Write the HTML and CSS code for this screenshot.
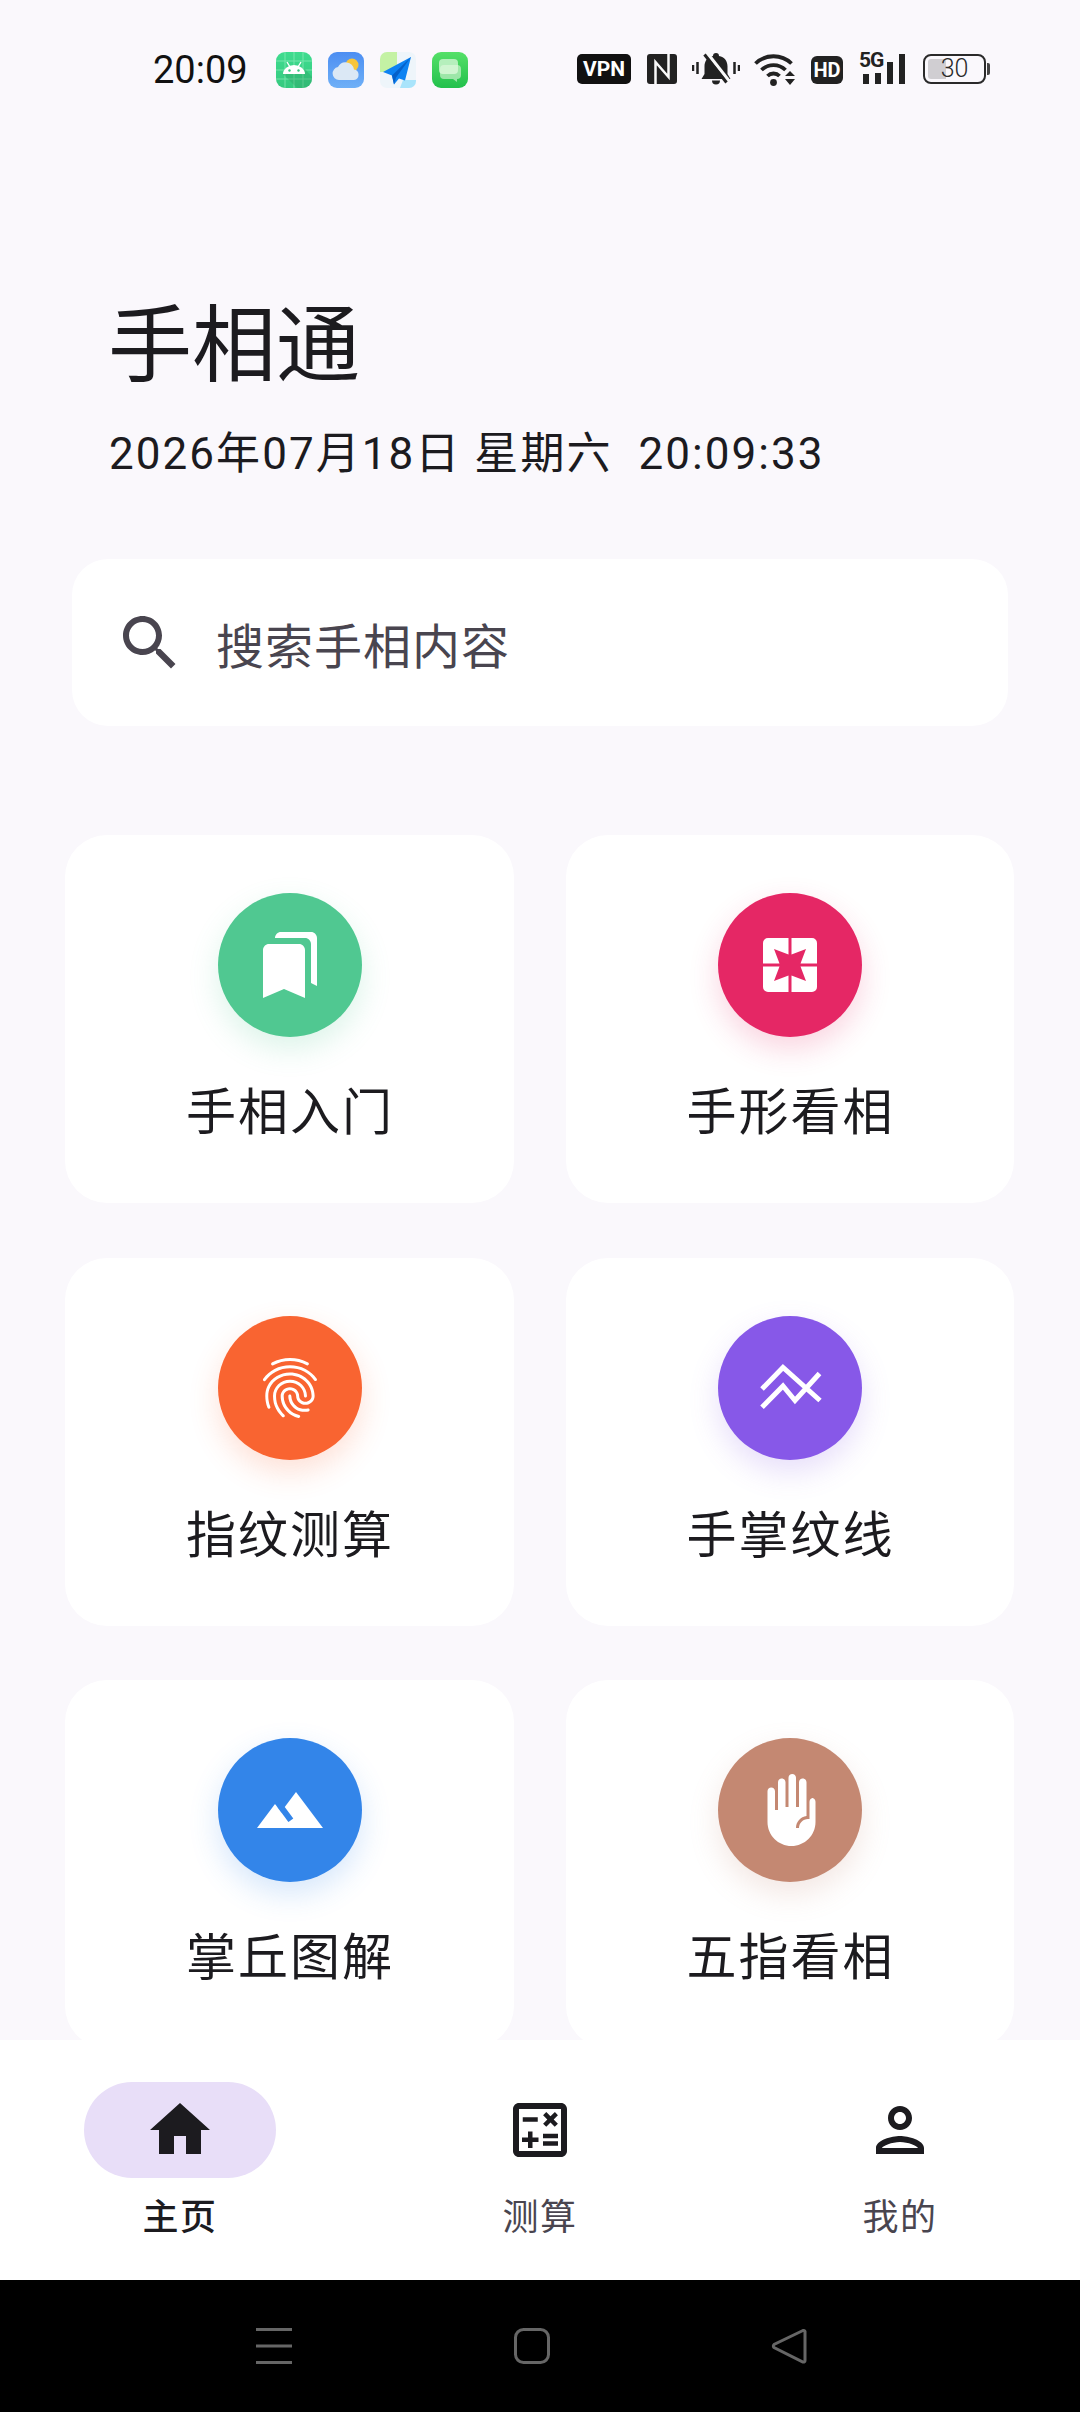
FILE: index.html
```html
<!DOCTYPE html>
<html lang="zh-CN">
	<head>
		<meta charset="utf-8">
		<title>手相通</title>
		<link rel="stylesheet" href="styles.css">
	</head>
	<body>
		<div class="screen">

			<div class="status">
				<span class="clock">20:09</span>
				<div class="apps">
					<svg class="app" viewBox="0 0 36 36">
						<defs><linearGradient id="g1" x1="0" y1="0" x2="0" y2="1"><stop offset="0" stop-color="#3fdc8f"/><stop offset="1" stop-color="#35c97f"/></linearGradient></defs>
						<rect width="36" height="36" rx="9" fill="url(#g1)"/>
						<path d="M9 0v36M18 0v36M27 0v36M0 9h36M0 18h36M0 27h36" stroke="#8eeebb" stroke-width="1" opacity=".7"/>
						<path d="M7 22l14 14h6a9 9 0 0 0 9-9v-2L29 17z" fill="#2a9d62" opacity=".35"/>
						<path d="M7 22a11 9 0 0 1 22 0z" fill="#fff"/>
						<path d="M11 10l3 5M25 10l-3 5" stroke="#fff" stroke-width="1.4"/>
						<circle cx="13.5" cy="18.5" r="1.2" fill="#35c97f"/><circle cx="22.5" cy="18.5" r="1.2" fill="#35c97f"/>
					</svg>
					<svg class="app" viewBox="0 0 36 36">
						<defs><linearGradient id="g2" x1="0" y1="0" x2="0" y2="1"><stop offset="0" stop-color="#4c8ef2"/><stop offset="1" stop-color="#6fb0f7"/></linearGradient></defs>
						<rect width="36" height="36" rx="9" fill="url(#g2)"/>
						<circle cx="24" cy="13" r="6.5" fill="#f8c53a"/>
						<path d="M11 28a6.500 6.500 0 0 1-1-12.900 8.500 8.500 0 0 1 16 2.400 5.300 5.300 0 0 1 0 10.500z" fill="#dbe8f5"/>
					</svg>
					<svg class="app" viewBox="0 0 36 36">
						<rect width="36" height="36" rx="7" fill="#eef5fa"/>
						<path d="M0 7a7 7 0 0 1 7-7h10v20H0z" fill="#c4f2a4"/>
						<path d="M20 36l3-8h13v1a7 7 0 0 1-7 7z" fill="#a9e4fb"/>
						<path d="M31 5L3 20l9 3.500 2 9 5-6 6 2z" fill="#0c82f2"/>
						<path d="M31 5L12 23.500l2 9 2-7z" fill="#0560c9"/>
					</svg>
					<svg class="app" viewBox="0 0 36 36">
						<defs><linearGradient id="g4" x1="0" y1="0" x2="0" y2="1"><stop offset="0" stop-color="#55e068"/><stop offset="1" stop-color="#22c04c"/></linearGradient></defs>
						<rect width="36" height="36" rx="9" fill="url(#g4)"/>
						<rect x="7" y="7" width="19" height="15" rx="4" fill="#b5efbc"/>
						<path d="M12 13h13a4 4 0 0 1 4 4v6a4 4 0 0 1-4 4v3l-4-3h-9a4 4 0 0 1-4-4v-6a4 4 0 0 1 4-4z" fill="#e2f8e0" opacity=".6"/>
					</svg>
				</div>
				<div class="sys">
					<span class="chip chip-vpn">VPN</span>
					<svg class="nfc" viewBox="0 0 30 30">
						<rect width="30" height="30" rx="3" fill="#222"/>
						<path d="M8.500 30V8l13 15V0" fill="none" stroke="#fafafa" stroke-width="2.500"/>
					</svg>
					<svg class="bell" viewBox="0 0 48 34">
						<path d="M24 1a3 3 0 0 1 3 3c5.500 1 8.500 5 8.500 10.500v7.500l3 5H9.500l3-5v-7.500C12.500 9 15.500 5 21 4a3 3 0 0 1 3-3zM20 28.500h8a4 4 0 0 1-8 0z" fill="#222"/>
						<path d="M15 1l22 28" stroke="#fafafa" stroke-width="3.500"/>
						<path d="M12.500 2.500l22 28" stroke="#222" stroke-width="3"/>
						<path d="M1 13v6M5.500 10v12M42.500 10v12M47 13v6" stroke="#222" stroke-width="2.500"/>
					</svg>
					<svg class="wifi" viewBox="0 0 41 34">
						<path d="M1.500 11.500a26 26 0 0 1 36 0M7.500 18a17 17 0 0 1 24 0M13.500 24a8.500 8.500 0 0 1 12 0" fill="none" stroke="#222" stroke-width="3.800"/>
						<circle cx="19.500" cy="30.500" r="3.400" fill="#222"/>
						<path d="M31 24l5-5 5 5zM31 27h10l-5 6z" fill="#222"/>
					</svg>
					<span class="chip chip-hd">HD</span>
					<div class="signal">
						<span class="five-g">5G</span>
						<i class="bar bar-1"></i><i class="bar bar-2"></i><i class="bar bar-3"></i><i class="bar bar-4"></i>
					</div>
					<div class="battery">
						<div class="battery-body"><div class="battery-fill"></div><span class="battery-num">30</span></div>
						<i class="battery-tip"></i>
					</div>
				</div>
			</div>

			<main class="content">
				<h1 class="title">手相通</h1>
				<p class="date">2026年07月18日 星期六&nbsp;&nbsp;20:09:33</p>

				<div class="search">
					<svg class="search-icon" viewBox="0 0 24 24"><path d="M15.500 14h-.79l-.28-.27C15.410 12.590 16 11.110 16 9.500 16 5.910 13.090 3 9.500 3S3 5.910 3 9.500 5.910 16 9.500 16c1.610 0 3.090-.59 4.230-1.570l.27.28v.79l5 4.990L20.490 19l-4.990-5zm-6 0C7.010 14 5 11.990 5 9.500S7.010 5 9.500 5 14 7.010 14 9.500 11.990 14 9.500 14z"/></svg>
					<span class="search-text">搜索手相内容</span>
				</div>

				<div class="grid">
					<div class="card">
						<div class="badge badge-green">
							<svg class="glyph" viewBox="0 0 24 24"><path d="M19 18l2 1V3c0-1.100-.9-2-2-2H8.990C7.890 1 7 1.900 7 3h10c1.100 0 2 .9 2 2v13zM15 5H5c-1.100 0-2 .9-2 2v16l7-3 7 3V7c0-1.100-.9-2-2-2z"/></svg>
						</div>
						<span class="card-label">手相入门</span>
					</div>
					<div class="card">
						<div class="badge badge-pink">
							<svg class="glyph-square" viewBox="0 0 54 54"><path d="M25.500 0H5a5 5 0 0 0-5 5v20.500h16.500L11 11l14.500 5.500zM28.500 0H49a5 5 0 0 1 5 5v20.500H37.500L43 11l-14.500 5.500zM25.500 54H5a5 5 0 0 1-5-5V28.500h16.500L11 43l14.500-5.500zM28.500 54H49a5 5 0 0 0 5-5V28.500H37.500L43 43l-14.500-5.500z"/></svg>
						</div>
						<span class="card-label">手形看相</span>
					</div>
					<div class="card">
						<div class="badge badge-orange">
							<svg class="glyph" viewBox="0 0 24 24"><path d="M17.810 4.470c-.08 0-.16-.02-.23-.06C15.660 3.420 14 3 12.010 3c-1.980 0-3.860.47-5.570 1.410-.24.13-.54.04-.68-.2-.13-.24-.04-.55.2-.68C7.820 2.520 9.860 2 12.010 2c2.130 0 3.990.47 6.030 1.520.25.13.34.43.21.67-.09.18-.26.28-.44.28zM3.500 9.720c-.1 0-.2-.03-.29-.09-.23-.16-.28-.47-.12-.7.99-1.400 2.250-2.500 3.750-3.270C9.980 4.040 14 4.030 17.150 5.650c1.500.77 2.760 1.860 3.750 3.250.16.22.11.54-.12.7-.23.16-.54.11-.7-.12-.9-1.260-2.040-2.250-3.390-2.940-2.870-1.470-6.540-1.470-9.400.01-1.360.7-2.500 1.700-3.400 2.960-.08.14-.23.21-.39.21zm6.250 12.070c-.13 0-.26-.05-.35-.15-.87-.87-1.340-1.430-2.010-2.640-.69-1.230-1.050-2.730-1.050-4.340 0-2.970 2.540-5.390 5.660-5.390s5.660 2.420 5.660 5.390c0 .28-.22.5-.5.5s-.5-.22-.5-.5c0-2.420-2.090-4.390-4.660-4.390-2.570 0-4.660 1.970-4.660 4.390 0 1.440.32 2.770.93 3.850.64 1.150 1.080 1.640 1.850 2.420.19.2.19.51 0 .71-.11.1-.24.15-.37.15zm7.170-1.850c-1.190 0-2.240-.3-3.100-.89-1.490-1.010-2.380-2.650-2.380-4.390 0-.28.22-.5.5-.5s.5.22.5.5c0 1.410.72 2.740 1.940 3.560.71.48 1.540.71 2.540.71.24 0 .64-.03 1.040-.1.27-.05.53.13.58.41.05.27-.13.53-.41.58-.57.11-1.070.12-1.210.12zM14.910 22c-.04 0-.09-.01-.13-.02-1.590-.44-2.630-1.030-3.720-2.100-1.400-1.390-2.170-3.240-2.170-5.220 0-1.620 1.380-2.940 3.080-2.940 1.700 0 3.080 1.320 3.080 2.940 0 1.070.93 1.940 2.080 1.940s2.080-.87 2.080-1.940c0-3.770-3.250-6.830-7.250-6.830-2.840 0-5.440 1.580-6.610 4.030-.39.81-.59 1.760-.59 2.800 0 .78.07 2.010.67 3.610.1.26-.03.55-.29.64-.26.1-.55-.04-.64-.29-.49-1.310-.73-2.610-.73-3.960 0-1.200.23-2.290.68-3.240 1.330-2.790 4.280-4.600 7.510-4.600 4.550 0 8.250 3.510 8.250 7.830 0 1.620-1.380 2.940-3.080 2.940s-3.080-1.320-3.080-2.940c0-1.070-.93-1.940-2.080-1.940s-2.080.87-2.080 1.940c0 1.710.66 3.310 1.870 4.510.95.94 1.860 1.460 3.270 1.850.27.07.42.35.35.61-.05.23-.26.38-.47.38z"/></svg>
						</div>
						<span class="card-label">指纹测算</span>
					</div>
					<div class="card">
						<div class="badge badge-purple">
							<svg class="glyph glyph-lines" viewBox="0 0 72 72"><path d="M8 37L29 15.500 66 48.500M8 55.300L29 34 41 48.500 65.500 21.500"/></svg>
						</div>
						<span class="card-label">手掌纹线</span>
					</div>
					<div class="card">
						<div class="badge badge-blue">
							<svg class="glyph" viewBox="0 0 24 24"><path d="M14 6l-3.750 5 2.850 3.800-1.600 1.200C9.810 13.750 7 10 7 10l-6 8h22L14 6z"/></svg>
						</div>
						<span class="card-label">掌丘图解</span>
					</div>
					<div class="card">
						<div class="badge badge-brown">
							<svg class="glyph" viewBox="-1 0 24 24"><path d="M18.750 8c-.69 0-1.250.56-1.250 1.250V15H17c-1.650 0-3 1.350-3 3h-1c0-2.040 1.530-3.720 3.500-3.970V2.750c0-.69-.56-1.250-1.250-1.250S14 2.060 14 2.750V11h-1V1.250C13 .56 12.440 0 11.750 0S10.500.56 10.500 1.250V11h-1V2.750c0-.69-.56-1.250-1.250-1.250S7 2.060 7 2.750V12H6V5.750c0-.69-.56-1.250-1.250-1.250S3.500 5.060 3.500 5.750V16c0 4.420 3.580 8 8 8s8-3.580 8-8V9.250c0-.69-.56-1.250-1.250-1.250z"/></svg>
						</div>
						<span class="card-label">五指看相</span>
					</div>
				</div>
			</main>

			<nav class="tabs">
				<div class="tab tab-active">
					<div class="tab-pill">
						<svg class="tab-icon" viewBox="0 0 24 24"><path d="M10 20v-6h4v6h5v-8h3L12 3 2 12h3v8z"/></svg>
					</div>
					<span class="tab-label">主页</span>
				</div>
				<div class="tab">
					<div class="tab-pill">
						<svg class="tab-icon" viewBox="0 0 24 24"><path d="M19 3H5c-1.100 0-2 .9-2 2v14c0 1.100.9 2 2 2h14c1.100 0 2-.9 2-2V5c0-1.100-.9-2-2-2zm0 16H5V5h14v14zM6.250 7.720h5v1.500h-5zM13 15.750h5v1.500h-5zM13 13.250h5v1.500h-5zM8 18h1.500v-2h2v-1.500h-2v-2H8v2H6V16h2zM14.090 10.950l1.410-1.410 1.410 1.410 1.060-1.060-1.410-1.420 1.410-1.410L16.970 6 15.500 7.410 14.090 6l-1.060 1.060 1.410 1.410-1.410 1.420z"/></svg>
					</div>
					<span class="tab-label">测算</span>
				</div>
				<div class="tab">
					<div class="tab-pill">
						<svg class="tab-icon" viewBox="0 0 24 24"><path d="M12 6c1.100 0 2 .9 2 2s-.9 2-2 2-2-.9-2-2 .9-2 2-2m0 10c2.700 0 5.800 1.290 6 2H6c.23-.72 3.310-2 6-2m0-12C9.790 4 8 5.790 8 8s1.790 4 4 4 4-1.790 4-4-1.790-4-4-4zm0 10c-2.670 0-8 1.340-8 4v2h16v-2c0-2.660-5.330-4-8-4z"/></svg>
					</div>
					<span class="tab-label">我的</span>
				</div>
			</nav>

			<div class="softkeys">
				<svg class="softkey" viewBox="0 0 36 36"><path d="M0 1.500h36M0 18h36M0 34.500h36" stroke-width="3"/></svg>
				<svg class="softkey" viewBox="0 0 36 36"><rect x="1.500" y="1.500" width="33" height="33" rx="8" stroke-width="3"/></svg>
				<svg class="softkey" viewBox="0 0 36 36"><path d="M32 2.500L3 16.500a2 2 0 0 0 0 3L32 34a1.500 1.500 0 0 0 2-1.500v-29a1.500 1.500 0 0 0-2-1z" stroke-width="3"/></svg>
			</div>

		</div>
	</body>
</html>
```

FILE: styles.css
```css
* { box-sizing: border-box; }

html, body {
	margin: 0;
	padding: 0;
}

body {
	background: #000;
	font-family: Roboto, "Noto Sans CJK SC", sans-serif;
	color: #1c1b1f;
}

.screen {
	width: 1080px;
	height: 2412px;
	display: flex;
	flex-direction: column;
	overflow: hidden;
	background: #faf8fc;
}

/*************************************
Status bar
**************************************/

.status {
	height: 90px;
	flex: none;
	display: flex;
	align-items: flex-start;
	padding: 52px 0 0 153px;
}

.clock {
	width: 123px;
	font-size: 38px;
	line-height: 36px;
	color: #111;
}

.apps {
	display: flex;
	gap: 16px;
	width: 301px;
}

.app {
	width: 36px;
	height: 36px;
	display: block;
}

.sys {
	display: flex;
	align-items: flex-start;
}

.chip {
	display: flex;
	align-items: center;
	justify-content: center;
	background: #111;
	color: #fff;
	font-weight: 700;
	border-radius: 5px;
}

.chip-vpn {
	width: 54px;
	height: 30px;
	margin-top: 2px;
	font-size: 21px;
}

.nfc {
	width: 30px;
	height: 30px;
	margin: 2px 0 0 16px;
}

.bell {
	width: 48px;
	height: 34px;
	margin-left: 15px;
}

.wifi {
	width: 41px;
	height: 34px;
	margin-left: 14px;
}

.chip-hd {
	width: 32px;
	height: 28px;
	margin: 4px 0 0 16px;
	font-size: 20px;
	border-radius: 6px;
	background: #222;
}

.signal {
	display: flex;
	align-items: flex-end;
	gap: 6px;
	position: relative;
	width: 47px;
	height: 32px;
	margin-left: 16px;
	padding-left: 4px;
}

.five-g {
	position: absolute;
	left: 0;
	top: -2px;
	font-size: 21px;
	line-height: 20px;
	letter-spacing: -1px;
	font-weight: 700;
	color: #222;
}

.bar {
	display: block;
	width: 6px;
	background: #222;
}

.bar-1 { height: 10px; }
.bar-2 { height: 11px; }
.bar-3 { height: 22px; }
.bar-4 { height: 30px; }

.battery {
	display: flex;
	align-items: center;
	margin: 2px 0 0 17px;
}

.battery-body {
	width: 63px;
	height: 30px;
	border: 2.500px solid #2a2a2a;
	border-radius: 8px;
	padding: 3px;
	position: relative;
}

.battery-fill {
	width: 18px;
	height: 100%;
	background: #d0ced2;
	border-radius: 3px 0 0 3px;
}

.battery-num {
	position: absolute;
	left: 0;
	right: 0;
	top: 0;
	text-align: center;
	font-size: 25px;
	font-weight: 300;
	line-height: 25px;
	color: #2a2a2a;
}

.battery-tip {
	display: block;
	width: 2.500px;
	height: 12px;
	margin-left: 1px;
	background: #444;
	border-radius: 0 2px 2px 0;
}

/*************************************
Scrolling content
**************************************/

.content {
	flex: 1;
	min-height: 0;
	overflow: hidden;
}

.title {
	margin: 207px 0 0 108px;
	font-size: 84px;
	line-height: 100px;
	font-weight: 400;
	letter-spacing: 0;
}

.date {
	margin: 27px 0 0 109px;
	font-size: 44px;
	line-height: 60px;
	letter-spacing: 2.050px;
	white-space: nowrap;
}

.search {
	display: flex;
	align-items: center;
	width: 936px;
	height: 167px;
	margin: 75px 0 0 72px;
	padding-left: 42px;
	background: #fff;
	border-radius: 36px;
}

.search-icon {
	width: 72px;
	height: 72px;
	fill: #49454f;
	flex: none;
}

.search-text {
	margin-left: 30px;
	font-size: 48px;
	letter-spacing: 1px;
	color: #49454f;
}

.grid {
	display: grid;
	grid-template-columns: 449px 448px;
	grid-auto-rows: 368px;
	column-gap: 52px;
	row-gap: 54.5px;
	margin: 109px 0 0 65px;
}

.card {
	display: flex;
	flex-direction: column;
	align-items: center;
	padding-top: 58px;
	background: #fff;
	border-radius: 42px;
}

.badge {
	width: 144px;
	height: 144px;
	border-radius: 50%;
	display: flex;
	align-items: center;
	justify-content: center;
}

.badge-green { background: #50c891; box-shadow: 0 12px 30px rgba(80,200,145,0.2); }
.badge-pink { background: #e52765; box-shadow: 0 12px 30px rgba(229,39,101,0.2); }
.badge-orange { background: #f96431; box-shadow: 0 12px 30px rgba(249,100,49,0.2); }
.badge-purple { background: #8758e8; box-shadow: 0 12px 30px rgba(135,88,232,0.2); }
.badge-blue { background: #3385e9; box-shadow: 0 12px 30px rgba(51,133,233,0.2); }
.badge-brown { background: #c48872; box-shadow: 0 12px 30px rgba(196,136,114,0.2); }

.glyph {
	width: 72px;
	height: 72px;
	fill: #fff;
}

.glyph-lines {
	fill: none;
	stroke: #fff;
	stroke-width: 5;
}

.glyph-square {
	width: 54px;
	height: 54px;
	fill: #fff;
}

.card-label {
	margin-top: 43px;
	padding-left: 1px;
	font-size: 50px;
	line-height: 66px;
	letter-spacing: 2px;
}

/*************************************
Bottom tabs
**************************************/

.tabs {
	height: 240px;
	flex: none;
	display: flex;
	justify-content: space-between;
	padding: 42px 84px 0;
	background: #fff;
}

.tab {
	width: 192px;
	display: flex;
	flex-direction: column;
	align-items: center;
}

.tab-pill {
	width: 192px;
	height: 96px;
	border-radius: 48px;
	display: flex;
	align-items: center;
	justify-content: center;
}

.tab-active .tab-pill {
	background: #e8def8;
}

.tab-icon {
	width: 72px;
	height: 72px;
	fill: #1c1b1f;
}

.tab-label {
	margin-top: 16px;
	font-size: 36px;
	line-height: 48px;
	letter-spacing: 1.500px;
	color: #49454f;
}

.tab-active .tab-label {
	color: #1c1b1f;
	font-weight: 500;
}

/*************************************
Soft keys
**************************************/

.softkeys {
	height: 132px;
	flex: none;
	display: flex;
	justify-content: space-between;
	padding: 48px 273px 0 256px;
	background: #000;
}

.softkey {
	width: 36px;
	height: 36px;
	fill: none;
	stroke: #666;
}
```
